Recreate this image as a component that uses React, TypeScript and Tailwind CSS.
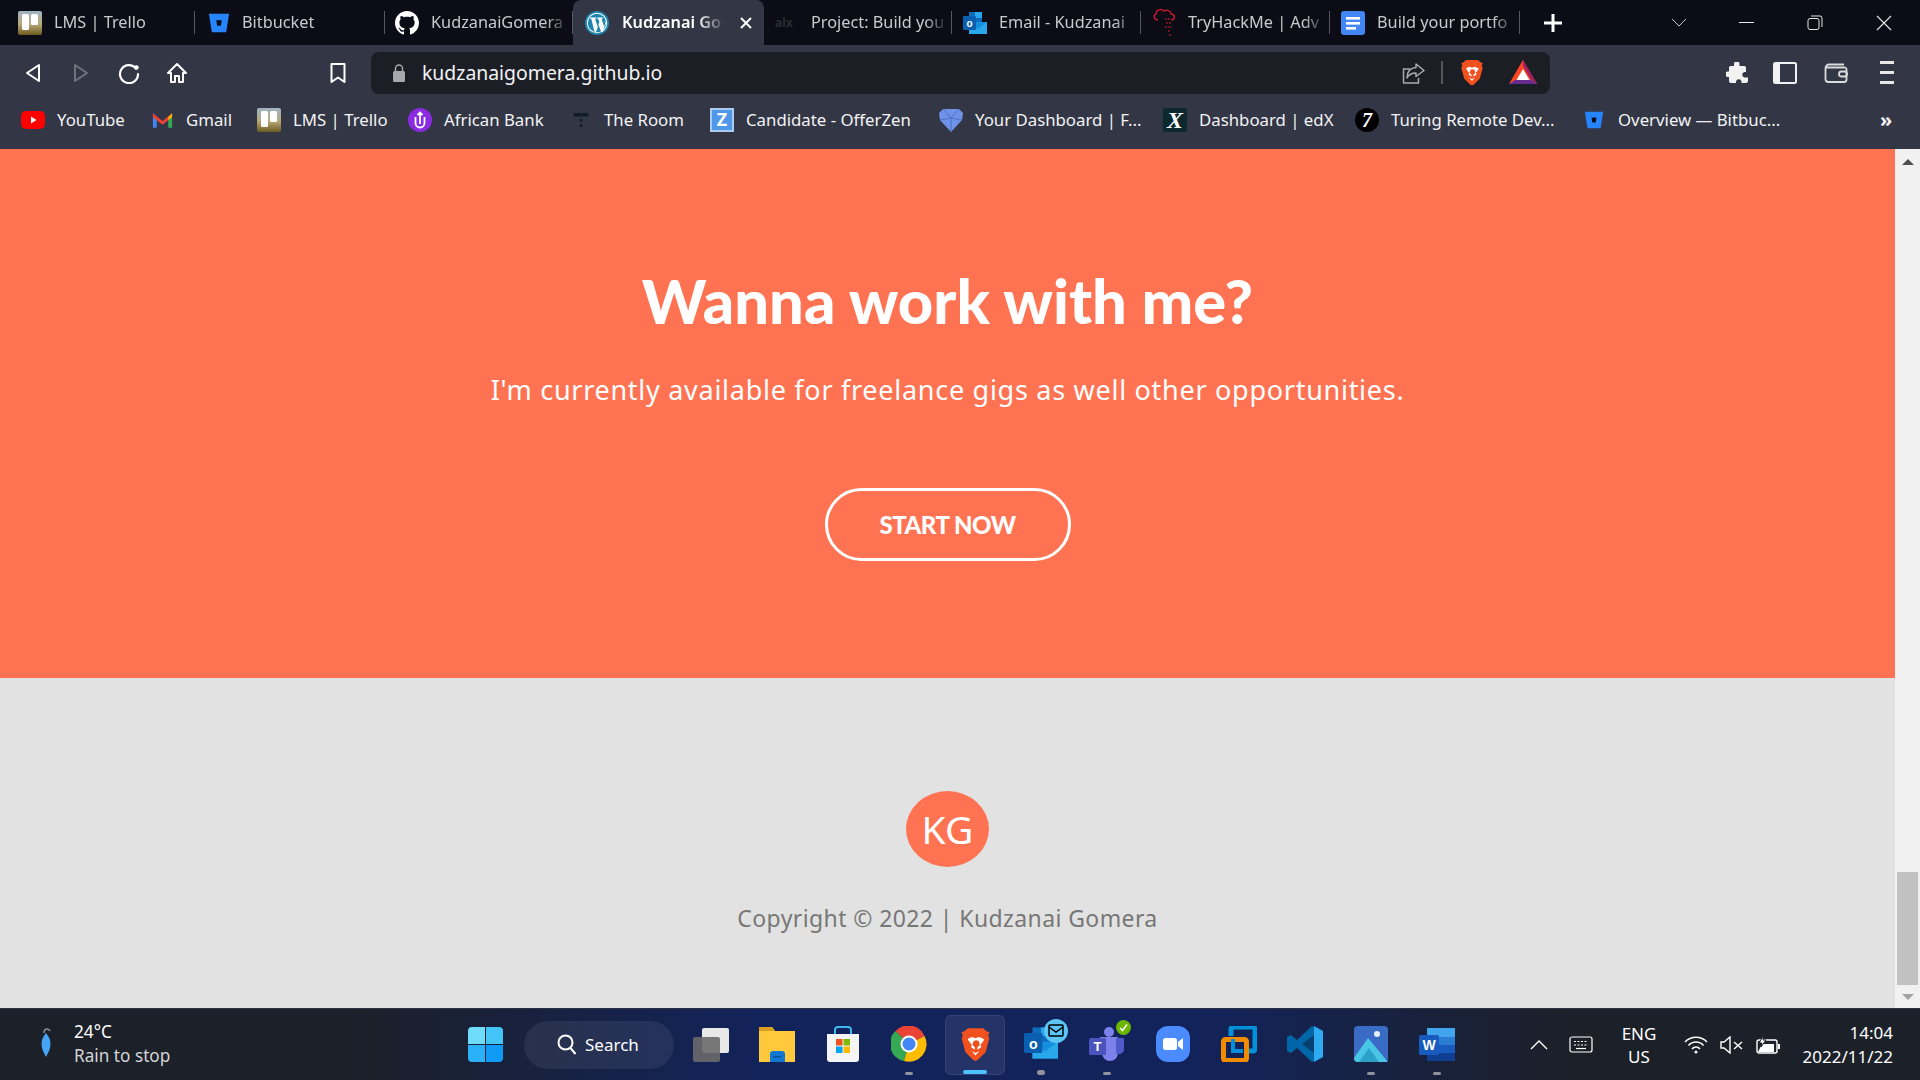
import React from "react";

const Trello = () => (
  <svg width="24" height="24" viewBox="0 0 24 24">
    <defs><linearGradient id="tr" x1="0" y1="0" x2="0" y2="1"><stop offset="0" stopColor="#9fb4c6" /><stop offset="0.55" stopColor="#b9a978" /><stop offset="1" stopColor="#6b5a1e" /></linearGradient></defs>
    <rect width="24" height="24" rx="2" fill="url(#tr)" />
    <rect x="4" y="3" width="7" height="16" rx="1.5" fill="#fff" />
    <rect x="13" y="3" width="7" height="11" rx="1.5" fill="#fff" />
  </svg>
);
const Bitbucket = ({ s = 22 }: { s?: number }) => (
  <svg width={s} height={s} viewBox="0 0 24 24">
    <path d="M1 2h22l-3.2 20H4.2z" fill="#2684ff" />
    <path d="M9 9h6l-1 6h-4z" fill="#0b0c16" />
  </svg>
);
const GitHub = () => (
  <svg width="24" height="24" viewBox="0 0 16 16" fill="#fff">
    <path d="M8 0C3.58 0 0 3.58 0 8c0 3.54 2.29 6.53 5.47 7.59.4.07.55-.17.55-.38 0-.19-.01-.82-.01-1.49-2.01.37-2.53-.49-2.69-.94-.09-.23-.48-.94-.82-1.13-.28-.15-.68-.52-.01-.53.63-.01 1.08.58 1.23.82.72 1.21 1.87.87 2.33.66.07-.52.28-.87.51-1.07-1.78-.2-3.64-.89-3.64-3.95 0-.87.31-1.59.82-2.15-.08-.2-.36-1.02.08-2.12 0 0 .67-.21 2.2.82.64-.18 1.32-.27 2-.27s1.36.09 2 .27c1.53-1.04 2.2-.82 2.2-.82.44 1.1.16 1.92.08 2.12.51.56.82 1.27.82 2.15 0 3.07-1.87 3.75-3.65 3.95.29.25.54.73.54 1.48 0 1.07-.01 1.93-.01 2.2 0 .21.15.46.55.38A8.01 8.01 0 0 0 16 8c0-4.42-3.58-8-8-8z" />
  </svg>
);
const WordPress = () => (
  <svg width="24" height="24" viewBox="0 0 24 24">
    <circle cx="12" cy="12" r="12" fill="#1f85ad" />
    <circle cx="12" cy="12" r="10.2" fill="#fff" />
    <circle cx="12" cy="12" r="9.2" fill="#1f85ad" />
    <path d="M5 6.5h6.5v1l-1.4.2 2.6 8 1.6-5-1.1-3-1.1-.2v-1H18v1l-1.5.2 2.7 8 .8-3c.4-1.6-.5-3-.9-3.6h-.1L21 12l-3.4 9h-1.4l-2.7-7.3L11 21H9.500L6.300 7.700 5 7.500z" fill="#fff" />
  </svg>
);
const Outlook = ({ s = 24 }: { s?: number }) => (
  <svg width={s} height={s} viewBox="0 0 24 24">
    <rect x="6" y="1" width="13" height="12" fill="#0f6cbd" />
    <rect x="12" y="1" width="7" height="6" fill="#28a8ea" />
    <path d="M6 11h18v12H6z" fill="#1490df" />
    <path d="M6 11l9 7 9-7v12H6z" fill="#28a8ea" />
    <rect x="0" y="5" width="13" height="14" rx="1" fill="#0a5fb0" />
    <text x="6.500" y="16" fontSize="10" fontWeight="700" fill="#fff" textAnchor="middle" fontFamily="Liberation Sans, sans-serif">o</text>
  </svg>
);
const Thm = () => (
  <svg width="26" height="36" viewBox="0 0 26 36">
    <path d="M7 15c-4 0-5-5-2-6 0-4 5-6 8-3 3-2 7 0 7 3 4 0 5 6 0 6" fill="none" stroke="#c5192d" strokeWidth="1.500" />
    <path d="M14 14h5M15 18h6M14 22h7M17 26h3M18 30h2" stroke="#6f1420" strokeWidth="2" strokeDasharray="2 1" />
  </svg>
);
const Docs = () => (
  <svg width="24" height="36" viewBox="0 0 24 36">
    <rect y="6" width="24" height="24" rx="3" fill="#4285f4" />
    <rect x="5" y="12" width="14" height="2.600" fill="#fff" />
    <rect x="5" y="17" width="14" height="2.600" fill="#fff" />
    <rect x="5" y="22" width="10" height="2.600" fill="#fff" />
  </svg>
);
const BraveLion = ({ s = 24 }: { s?: number }) => (
  <svg width={s} height={s * 1.1} viewBox="0 0 24 27">
    <path d="M6 1h12l3 2.500 2 .5-1 3 1 2-3 11-6 6-2 1-2-1-6-6-3-11 1-2-1-3 2-.5z" fill="#f1501f" />
    <path d="M6.500 9l3-1 2.500 1 2.500-1 3 1 1.500 1-3 4 .5 2-3 2v-2l2-2-1-3-2-.5-2 .5-1 3 2 2v2l-3-2 .5-2-3-4z" fill="#fff" />
    <path d="M9 19l3 1.500 3-1.500-3 3.500z" fill="#fff" />
  </svg>
);
const Bat = () => (
  <svg width="28" height="25" viewBox="0 0 28 25">
    <path d="M14 0l14 24H0z" fill="#ff4724" />
    <path d="M14 0l14 24-6-4-8-14z" fill="#9e1f63" />
    <path d="M0 24l6-4h16l6 4z" fill="#662d91" />
    <path d="M14 9l6.500 11h-13z" fill="#fff" />
  </svg>
);

const icon = "stroke-current fill-none";
const Back = ({ c = "text-white" }: { c?: string }) => (
  <svg width="16" height="20" viewBox="0 0 16 20" className={`${icon} ${c}`} strokeWidth="2"><path d="M14 2v16L2 10z" strokeLinejoin="round" /></svg>
);
const Forward = () => (
  <svg width="16" height="20" viewBox="0 0 16 20" className={`${icon} text-[#6f737d]`} strokeWidth="2"><path d="M2 2v16l12-8z" strokeLinejoin="round" /></svg>
);
const Reload = () => (
  <svg width="22" height="22" viewBox="0 0 22 22" className={`${icon} text-white`} strokeWidth="2.200" strokeLinecap="round"><path d="M18 6.500A9 9 0 1 0 20 12" /><circle cx="18.500" cy="5.500" r="2.200" fill="#fff" stroke="none" /></svg>
);
const Home = () => (
  <svg width="22" height="22" viewBox="0 0 22 22" className={`${icon} text-white`} strokeWidth="2" strokeLinejoin="round"><path d="M11 2L2 11h3v9h4v-6h4v6h4v-9h3z" /></svg>
);
const Bookmark = () => (
  <svg width="18" height="22" viewBox="0 0 18 22" className={`${icon} text-white`} strokeWidth="2" strokeLinejoin="round"><path d="M2.500 2h13v18L9 15.500 2.500 20z" /></svg>
);
const Lock = () => (
  <svg width="14" height="18" viewBox="0 0 14 18"><rect x="1" y="7" width="12" height="11" rx="1.500" fill="#a7a9ae" /><path d="M3.500 7V4.500a3.500 3.500 0 0 1 7 0V7" fill="none" stroke="#a7a9ae" strokeWidth="1.500" /></svg>
);
const Share = () => (
  <svg width="24" height="22" viewBox="0 0 24 22" className={`${icon} text-[#a9abb0]`} strokeWidth="1.500" strokeLinejoin="round"><path d="M14 2l8 6.500-8 6v-3.500c-4 0-7 1-9 5 0-6 3-10 9-10.500z" /><path d="M8 7H1.500v14h15v-5" /></svg>
);
const Puzzle = () => (
  <svg width="22" height="22" viewBox="0 0 22 22" fill="#f2f2f2"><path d="M8 1.500a2.800 2.800 0 0 1 5.500 0V4h5a1.500 1.500 0 0 1 1.500 1.500V10h-1.500a2.800 2.800 0 0 0 0 5.500H22V19a2 2 0 0 1-2 2h-4.500v-1.500a2.800 2.800 0 0 0-5.500 0V21H5a2 2 0 0 1-2-2v-4H1.500a2.800 2.800 0 0 1 0-5.500H3v-4A1.500 1.500 0 0 1 4.500 4H8z" /></svg>
);
const Sidebar = () => (
  <svg width="24" height="22" viewBox="0 0 24 22"><rect x="1" y="1" width="22" height="20" rx="1.500" fill="none" stroke="#f2f2f2" strokeWidth="2" /><rect x="1" y="1" width="6" height="20" fill="#f2f2f2" /></svg>
);
const Wallet = () => (
  <svg width="24" height="20" viewBox="0 0 24 20" className={`${icon} text-[#dcdcdc]`} strokeWidth="1.800"><path d="M20 1.500H5A3.500 3.500 0 0 0 1.500 5v11A3 3 0 0 0 4.500 19H20a2.500 2.500 0 0 0 2.500-2.500V6.500A2 2 0 0 0 20 4.500H2" /><rect x="15" y="8.500" width="8" height="5" rx="2.500" /></svg>
);
const Menu = () => (
  <div className="flex flex-col gap-[7px]"><div className="h-[3px] w-[14px] bg-[#e8e8e8]" /><div className="h-[3px] w-[14px] bg-[#e8e8e8]" /><div className="h-[3px] w-[14px] bg-[#e8e8e8]" /></div>
);

type Tab = { w: string; pl: string; gap: string; label: string; fav: React.ReactNode; active?: boolean };
const tabs: Tab[] = [
  { w: "w-[195px]", pl: "pl-[18px]", gap: "gap-3", label: "LMS | Trello", fav: <Trello /> },
  { w: "w-[190px]", pl: "pl-[13px]", gap: "gap-[12px]", label: "Bitbucket", fav: <Bitbucket /> },
  { w: "w-[188px]", pl: "pl-[10px]", gap: "gap-[12px]", label: "KudzanaiGomera", fav: <GitHub /> },
  { w: "w-[191px]", pl: "pl-[12px]", gap: "gap-[13px]", label: "Kudzanai Go", fav: <WordPress />, active: true },
  { w: "w-[188px]", pl: "pl-[11px]", gap: "gap-[16px]", label: "Project: Build you", fav: <span className="block w-[20px] text-[12px] font-bold text-[#2a2c33]">alx</span> },
  { w: "w-[189px]", pl: "pl-[11px]", gap: "gap-[12px]", label: "Email - Kudzanai", fav: <Outlook /> },
  { w: "w-[189px]", pl: "pl-[10px]", gap: "gap-[11px]", label: "TryHackMe | Adv", fav: <Thm /> },
  { w: "w-[190px]", pl: "pl-[11px]", gap: "gap-[12px]", label: "Build your portfo", fav: <Docs /> },
];

type Bm = { w: string; label: string; fav: React.ReactNode };
const bookmarks: Bm[] = [
  { w: "w-[130px]", label: "YouTube", fav: <svg width="24" height="24" viewBox="0 0 24 24"><rect y="3" width="24" height="18" rx="5" fill="#f00" /><path d="M10 8.500v7l5.500-3.500z" fill="#fff" /></svg> },
  { w: "w-[106px]", label: "Gmail", fav: <svg width="23" height="24" viewBox="0 0 24 24"><path d="M2 5v15h4V9z" fill="#4285f4" /><path d="M22 5v15h-4V9z" fill="#34a853" /><path d="M2 5l10 8 10-8v4l-10 8L2 9z" fill="#ea4335" /><path d="M18 9l4-4v4l-4 3z" fill="#fbbc04" /></svg> },
  { w: "w-[151px]", label: "LMS | Trello", fav: <Trello /> },
  { w: "w-[163px]", label: "African Bank", fav: <svg width="24" height="24" viewBox="0 0 24 24"><circle cx="12" cy="12" r="12" fill="#8a2be2" /><path d="M7.500 9v6a4.500 4.500 0 0 0 9 0V9M12 5v11M9.500 7L12 4.500 14.500 7" fill="none" stroke="#fff" strokeWidth="1.800" /></svg> },
  { w: "w-[139px]", label: "The Room", fav: <svg width="21" height="24" viewBox="0 0 24 24"><rect x="3" y="4" width="17" height="4" fill="#0f1c2a" /><rect x="10" y="11" width="3" height="3" fill="#0f1c2a" /><rect x="10" y="17" width="3" height="3" fill="#0f1c2a" /></svg> },
  { w: "w-[229px]", label: "Candidate - OfferZen", fav: <div className="flex h-[24px] w-[24px] items-center justify-center border-2 border-[#a9cdf2] bg-[#4f97e8] text-[18px] font-bold text-white">Z</div> },
  { w: "w-[224px]", label: "Your Dashboard | F...", fav: <svg width="24" height="24" viewBox="0 0 24 24"><path d="M0 5l4-4h16l4 4-1 7-11 12L1 12z" fill="#7093ea" /><path d="M4 1l8 9 8-9M1 12l11-2 11 2M12 10v14" fill="none" stroke="#4f6fc4" strokeWidth="1" /></svg> },
  { w: "w-[192px]", label: "Dashboard | edX", fav: <div className="flex h-[24px] w-[24px] items-center justify-center bg-[#0c2a2e] font-['Liberation_Serif',serif] text-[24px] font-bold italic text-white">X</div> },
  { w: "w-[229px]", label: "Turing Remote Dev...", fav: <div className="flex h-[24px] w-[24px] items-center justify-center rounded-full bg-black font-['Liberation_Serif',serif] text-[20px] font-bold italic text-white">7</div> },
  { w: "w-[230px]", label: "Overview — Bitbuc...", fav: <div className="mr-[2px]"><Bitbucket s={20} /></div> },
];

const Tile = ({ children, dot, active }: { children: React.ReactNode; dot?: boolean; active?: boolean }) => (
  <div className="flex h-[71px] w-[66px] items-center justify-center">
    <div className={`flex h-[60px] w-[60px] flex-col items-center rounded-md ${active ? "bg-[#ffffff14] border border-[#ffffff12]" : ""}`}>
      <div className="mt-[11px] flex h-[36px] w-[36px] items-center justify-center">{children}</div>
      {dot && <div className="mt-[10px] h-[5px] w-[8px] rounded-full bg-[#8e939e]" />}
      {active && <div className="mt-[9px] h-[5px] w-[24px] rounded-full bg-[#4cc2ff]" />}
    </div>
  </div>
);

export default function App() {
  return (
    <div className="flex h-[1080px] w-[1920px] flex-col overflow-hidden bg-[#e2e2e2] font-['Noto_Sans','Open_Sans',sans-serif]">
      {/* tab strip */}
      <div className="flex h-[45px] shrink-0 items-end bg-[#0b0c16]">
        {tabs.map((t) => (
          <div
            key={t.label}
            className={`${t.w} ${t.pl} ${t.gap} flex h-[45px] shrink-0 items-center overflow-hidden ${
              t.active ? "rounded-t-lg bg-[#333644] pr-[11px]" : "py-[11px]"
            }`}
          >
            {t.fav}
            <div className={`relative flex-1 self-stretch overflow-hidden ${t.active ? "" : "border-r border-[#55575f]"}`}>
              <span className={`flex h-full items-center whitespace-nowrap text-[16.300px] ${t.active ? "font-semibold text-white [mask-image:linear-gradient(90deg,#000_72%,transparent_100%)]" : "text-[#c9cacd] [mask-image:linear-gradient(90deg,#000_82%,transparent_98%)]"}`}>
                {t.label}
              </span>
            </div>
            {t.active && (
              <svg width="14" height="14" viewBox="0 0 14 14" className="shrink-0" stroke="#fff" strokeWidth="2"><path d="M2 2l10 10M12 2L2 12" /></svg>
            )}
          </div>
        ))}
        <div className="flex h-[45px] flex-1 items-center text-white">
          <svg width="20" height="20" viewBox="0 0 20 20" className="ml-[23px]" stroke="#fff" strokeWidth="3"><path d="M10 1v18M1 10h18" /></svg>
          <svg width="16" height="9" viewBox="0 0 16 9" className="ml-[108px]" fill="none" stroke="#c5c5c8" strokeWidth="1"><path d="M1 1l7 7 7-7" /></svg>
          <div className="ml-[52px] h-px w-[15px] bg-[#e8e8e8]" />
          <svg width="16" height="16" viewBox="0 0 16 16" className="ml-[53px]" fill="none" stroke="#e8e8e8" strokeWidth="1"><rect x="1" y="3.500" width="11" height="11" rx="2" /><path d="M4 1h9a2 2 0 0 1 2 2v9" /></svg>
          <svg width="16" height="16" viewBox="0 0 16 16" className="ml-[53px]" fill="none" stroke="#e8e8e8" strokeWidth="1.100"><path d="M1 1l14 14M15 1L1 15" /></svg>
        </div>
      </div>

      {/* toolbar */}
      <div className="flex h-[55px] shrink-0 items-center bg-[#333644]">
        <div className="flex w-[48px] justify-center pl-[18px]"><Back /></div>
        <div className="flex w-[48px] justify-center pl-[18px]"><Forward /></div>
        <div className="flex w-[48px] justify-center pl-[18px]"><Reload /></div>
        <div className="flex w-[48px] justify-center pl-[17px]"><Home /></div>
        <div className="ml-[121px] flex w-[48px] justify-center pl-[1px]"><Bookmark /></div>
        <div className="ml-[10px] flex h-[42px] w-[1179px] items-center rounded-lg bg-[#1c1e26] pl-[21px]">
          <Lock />
          <span className="ml-[16px] text-[19.400px] text-[#f2f3f4]">kudzanaigomera.github.io</span>
          <div className="ml-auto"><Share /></div>
          <div className="ml-[15px] h-[23px] w-[2px] bg-[#55575f]" />
          <div className="ml-[17px]"><BraveLion s={24} /></div>
          <div className="ml-[25px] mr-[13px]"><Bat /></div>
        </div>
        <div className="ml-[176px]"><Puzzle /></div>
        <div className="ml-[25px]"><Sidebar /></div>
        <div className="ml-[27px]"><Wallet /></div>
        <div className="ml-[32px]"><Menu /></div>
      </div>

      {/* bookmarks */}
      <div className="flex h-[49px] shrink-0 items-center bg-[#333644] pl-[21px] pb-[10px] text-[16.800px] text-[#f2f3f4]">
        {bookmarks.map((b) => (
          <div key={b.label} className={`${b.w} flex shrink-0 items-center gap-3 whitespace-nowrap`}>
            {b.fav}
            <span>{b.label}</span>
          </div>
        ))}
        <span className="ml-[66px] text-[20px] font-bold leading-none">»</span>
      </div>

      {/* page */}
      <div className="flex min-h-0 flex-1">
        <div className="flex w-[1895px] flex-col">
          <section className="flex h-[529px] flex-col items-center bg-[#ff7353] text-white">
            <h1 className="mt-[113px] font-['Lato',sans-serif] text-[61.400px] font-black leading-[76px]">Wanna work with me?</h1>
            <p className="mt-[32px] text-[27px] leading-[40px] tracking-[0.72px]">I'm currently available for freelance gigs as well other opportunities.</p>
            <a className="mt-[78px] flex h-[73px] w-[246px] items-center justify-center rounded-full border-[3px] border-white font-['Lato',sans-serif] text-[24px] font-black tracking-[-0.5px]">START NOW</a>
          </section>
          <footer className="flex flex-1 flex-col items-center">
            <div className="mt-[113px] flex h-[76px] w-[83px] items-center justify-center rounded-[50%] bg-[#ff7353] text-[39px] text-white">KG</div>
            <p className="mt-[33px] text-[23px] leading-[36px] tracking-[0.4px] text-[#777777]">Copyright © 2022 | Kudzanai Gomera</p>
          </footer>
        </div>
        <div className="flex w-[25px] flex-col items-center bg-[#f1f1f1]">
          <div className="mt-[10px] h-0 w-0 border-x-[6px] border-b-[6px] border-x-transparent border-b-[#505050]" />
          <div className="mt-[707px] h-[113px] w-[21px] bg-[#c1c1c1]" />
          <div className="mt-[9px] h-0 w-0 border-x-[6px] border-t-[6px] border-x-transparent border-t-[#a3a3a3]" />
        </div>
      </div>

      {/* taskbar */}
      <div className="flex h-[72px] shrink-0 items-center border-t border-[#2c3040] bg-[linear-gradient(90deg,#1c2028_0%,#1c2028_18%,#12235c_40%,#12235c_62%,#1c2028_82%)] text-white">
        <div className="flex w-[468px] items-center">
          <svg width="14" height="36" viewBox="0 0 14 36" className="ml-[39px] mt-[-2px]"><path d="M5 7c0-5 5-5 6-2" fill="none" stroke="#8a8f98" strokeWidth="1.500" /><path d="M7 7c4 5 6 10 3 18l-3 6-3-6C1 17 3 12 7 7z" fill="#45a6f5" /></svg>
          <div className="ml-[21px] mt-[-2px] flex flex-col text-[17.200px] leading-[24px]">
            <span>24°C</span>
            <span className="text-[#d4d5d8]">Rain to stop</span>
          </div>
        </div>
        <div className="grid h-[35px] w-[35px] grid-cols-2 gap-[1px] overflow-hidden rounded-sm">
          <div className="bg-[#6fdcfb]" /><div className="bg-[#43c6f7]" /><div className="bg-[#2ab1f7]" /><div className="bg-[#0f9bf5]" />
        </div>
        <div className="ml-[21px] flex h-[48px] w-[150px] items-center rounded-full bg-[#ffffff12] pl-[33px]">
          <svg width="20" height="22" viewBox="0 0 20 22" fill="none" stroke="#fff" strokeWidth="2"><circle cx="8.500" cy="8.500" r="7" /><path d="M13.500 14l5 6" /></svg>
          <span className="ml-[8px] text-[17px]">Search</span>
        </div>
        <div className="ml-[4px] flex">
          <Tile><svg width="36" height="36" viewBox="0 0 36 36"><rect x="9" y="2" width="27" height="25" rx="2" fill="#e8e8e8" /><rect y="11" width="27" height="25" rx="2" fill="#6a6a6a" fillOpacity="0.900" /></svg></Tile>
          <Tile><svg width="36" height="36" viewBox="0 0 36 36"><path d="M0 1h13l3 4h20v31H0z" fill="#ffc83d" /><path d="M0 1h13l3 4H0z" fill="#d9a11e" /><path d="M11 36V28a3 3 0 0 1 3-3h9a3 3 0 0 1 3 3v8z" fill="#0f78d4" /><rect x="14" y="30" width="8" height="1.500" fill="#0a4f8f" /></svg></Tile>
          <Tile><svg width="36" height="36" viewBox="0 0 36 36"><path d="M2 8h32v25a3 3 0 0 1-3 3H5a3 3 0 0 1-3-3z" fill="#f5f5f5" /><path d="M10 8V4a3 3 0 0 1 3-3h10a3 3 0 0 1 3 3v4" fill="none" stroke="#3db8e8" strokeWidth="2" /><rect x="11" y="13" width="6.500" height="6.500" fill="#f25022" /><rect x="18.500" y="13" width="6.500" height="6.500" fill="#7fba00" /><rect x="11" y="20.500" width="6.500" height="6.500" fill="#00a4ef" /><rect x="18.500" y="20.500" width="6.500" height="6.500" fill="#ffb900" /></svg></Tile>
          <Tile dot><svg width="36" height="36" viewBox="0 0 36 36"><path d="M18 18L4.500 5A17.500 17.500 0 0 1 33.500 10z" fill="#ea4335" /><path d="M4.500 5A17.500 17.500 0 0 0 13 35l5-17z" fill="#34a853" /><path d="M33.500 10A17.500 17.500 0 0 1 13 35l5-17z" fill="#fbbc04" /><circle cx="18" cy="18" r="8.500" fill="#fff" /><circle cx="18" cy="18" r="6.500" fill="#4285f4" /></svg></Tile>
          <Tile active><BraveLion s={31} /></Tile>
          <Tile dot>
            <div className="relative">
              <Outlook s={34} />
              <div className="absolute left-[20px] top-[-7px] flex h-[24px] w-[24px] items-center justify-center rounded-full bg-[#5bc5f5]">
                <svg width="16" height="13" viewBox="0 0 16 13" fill="none" stroke="#000" strokeWidth="1.500"><rect x="1" y="1" width="14" height="11" rx="1" /><path d="M1 3l7 5 7-5" /></svg>
              </div>
            </div>
          </Tile>
          <Tile dot>
            <div className="relative">
              <svg width="36" height="36" viewBox="0 0 36 36"><circle cx="20" cy="6" r="5" fill="#7b83eb" /><path d="M11 11h18v16a8 8 0 0 1-16 0z" fill="#7b83eb" /><path d="M27 12h8v12a5 5 0 0 1-8 3z" fill="#5059c9" /><rect y="12" width="17" height="17" rx="1.500" fill="#4b53bc" /><text x="8.500" y="25" fontSize="13" fontWeight="700" fill="#fff" textAnchor="middle" fontFamily="Liberation Sans, sans-serif">T</text></svg>
              <div className="absolute left-[27px] top-[-6px] flex h-[15px] w-[15px] items-center justify-center rounded-full bg-[#6bb700]">
                <svg width="9" height="9" viewBox="0 0 9 9" fill="none" stroke="#fff" strokeWidth="1.500"><path d="M1 5l2.500 2.500L8 1.500" /></svg>
              </div>
            </div>
          </Tile>
          <Tile><svg width="34" height="36" viewBox="0 0 34 36"><rect width="34" height="36" rx="12" fill="#4a8cff" /><rect x="7" y="12" width="14" height="12" rx="2.500" fill="#fff" /><path d="M22 16l5-4v12l-5-4z" fill="#fff" /></svg></Tile>
          <Tile><svg width="36" height="36" viewBox="0 0 36 36" fill="none"><path d="M10 10V3a2 2 0 0 1 2-2h20a2 2 0 0 1 2 2v20a2 2 0 0 1-2 2h-7" stroke="#0091da" strokeWidth="5" /><rect x="2.500" y="13.500" width="23" height="21" rx="2" stroke="#f38b00" strokeWidth="5" /><path d="M12 13v12h10" stroke="#0091da" strokeWidth="4" /></svg></Tile>
          <Tile><svg width="36" height="36" viewBox="0 0 36 36"><path d="M25 0l11 5v26l-11 5-15-14-6 5-4-2V11l4-2 6 5z" fill="#0065a9" /><path d="M27 0l9 5v26l-9 5z" fill="#2fa9f0" /><path d="M27 9L15 18l12 9z" fill="#0b1e3c" fillOpacity="0.500" /></svg></Tile>
          <Tile dot><svg width="34" height="36" viewBox="0 0 34 36"><rect width="34" height="36" rx="4" fill="#3a6cc6" /><circle cx="23" cy="8" r="3" fill="#e8f0fb" /><path d="M0 32L14 12l20 24H4a4 4 0 0 1-4-4z" fill="#49c6e6" /><path d="M5 36l10-14 10 14z" fill="#2ca0c8" /></svg></Tile>
          <Tile dot><svg width="36" height="36" viewBox="0 0 36 36"><rect x="8" y="2" width="28" height="33" rx="2" fill="#2b7cd3" /><rect x="8" y="2" width="28" height="9" fill="#41a5ee" /><rect x="8" y="19" width="28" height="8" fill="#185abd" /><rect x="8" y="27" width="28" height="8" fill="#103f91" /><rect y="9" width="20" height="20" rx="1.500" fill="#185abd" /><text x="10" y="24" fontSize="14" fontWeight="700" fill="#fff" textAnchor="middle" fontFamily="Liberation Sans, sans-serif">W</text></svg></Tile>
        </div>
        <svg width="18" height="10" viewBox="0 0 18 10" className="ml-[60px]" fill="none" stroke="#fff" strokeWidth="1.400"><path d="M1 9l8-8 8 8" /></svg>
        <svg width="24" height="18" viewBox="0 0 24 18" className="ml-[21px]" fill="none" stroke="#fff" strokeWidth="1.200"><rect x="1" y="1" width="22" height="15" rx="2" /><path d="M5 5.500h14M5 9h14" strokeDasharray="2 1.500" /><path d="M7 12.500h10" /></svg>
        <div className="ml-[28px] flex w-[36px] flex-col items-center text-[17px] leading-[23px]"><span>ENG</span><span>US</span></div>
        <svg width="24" height="18" viewBox="0 0 24 18" className="ml-[27px]" fill="none" stroke="#fff" strokeWidth="1.500"><path d="M1 6a15 15 0 0 1 22 0M4.500 9.500a10 10 0 0 1 15 0M8 13a5 5 0 0 1 8 0" /><circle cx="12" cy="16" r="1.500" fill="#fff" stroke="none" /></svg>
        <svg width="24" height="18" viewBox="0 0 24 18" className="ml-[12px]" fill="none" stroke="#fff" strokeWidth="1.400"><path d="M1 6h3l6-5v16l-6-5H1z" /><path d="M14 6l8 7M22 6l-8 7" /></svg>
        <svg width="24" height="20" viewBox="0 0 24 20" className="ml-[12px]"><rect x="1" y="5" width="20" height="13" rx="2" fill="none" stroke="#fff" strokeWidth="1.400" /><path d="M2 17l4-8h12v8z" fill="#fff" /><rect x="22" y="9" width="2" height="5" fill="#fff" /><path d="M8 0L3 8h3L5 12l5-7H7z" fill="#fff" stroke="#1c2028" /></svg>
        <div className="ml-auto mr-[27px] flex flex-col items-end text-[17px] leading-[24px]"><span>14:04</span><span>2022/11/22</span></div>
      </div>
    </div>
  );
}
